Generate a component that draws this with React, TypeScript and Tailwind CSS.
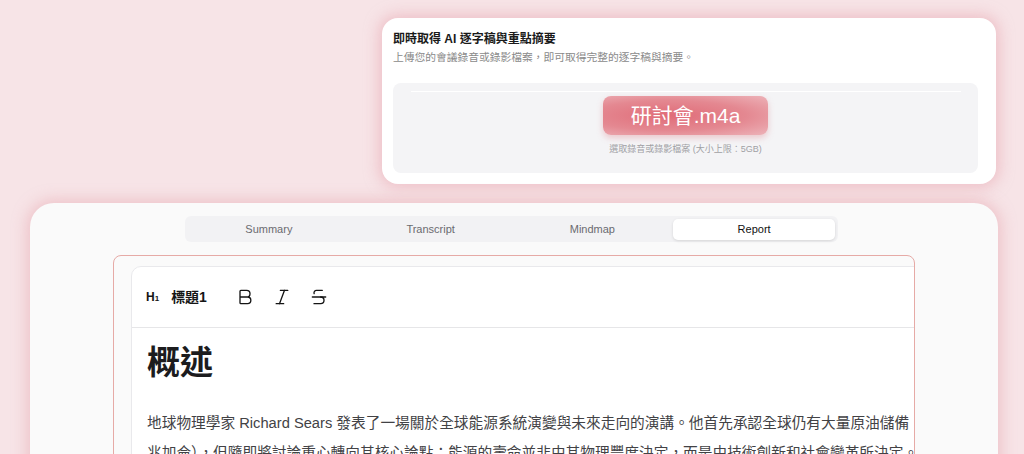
import { Bold, Italic, Strikethrough } from "lucide-react"

const tabs = ["Summary", "Transcript", "Mindmap", "Report"]

const font = "font-['Liberation_Sans','Noto_Sans_CJK_TC',sans-serif]"

export default function App() {
  return (
    <div className={`h-[454px] w-[1024px] overflow-hidden bg-[#f7e4e7] ${font}`}>
      <div className="flex flex-col pt-[18px]">
        {/* Upload card */}
        <div className="ml-[382px] h-[166px] w-[614px] rounded-[16px] bg-white pl-[11px] pt-[13px] shadow-[0_0_14px_4px_rgba(232,168,176,0.55)]">
          <h2 className="text-[12px] font-bold leading-[16px] text-[#1a1a1a]">
            即時取得 AI 逐字稿與重點摘要
          </h2>
          <p className="mt-[3px] text-[10.75px] leading-[14px] text-[#8a8a8a]">
            上傳您的會議錄音或錄影檔案，即可取得完整的逐字稿與摘要。
          </p>
          <div className="mt-[19px] flex h-[90px] w-[585px] flex-col items-center rounded-[8px] bg-[#f4f4f6]">
            <div className="mt-[8px] h-px w-[550px] bg-white" />
            <div className="mt-[4px] flex h-[39px] w-[165px] items-center justify-center rounded-[8px] bg-[radial-gradient(ellipse_at_40%_50%,#e06c78_0%,#e48891_55%,#edb3b9_100%)] shadow-[0_3px_6px_rgba(220,120,130,0.35)]">
              <span className="text-[21px] leading-none text-white">研討會.m4a</span>
            </div>
            <p className="mt-[8px] text-[9px] leading-[12px] text-[#a0a0a4]">
              選取錄音或錄影檔案 (大小上限：5GB)
            </p>
          </div>
        </div>

        {/* Report card */}
        <div className="ml-[30px] mt-[19px] h-[300px] w-[968px] rounded-[24px] bg-[#fafafa] pt-[13px] shadow-[0_0_14px_4px_rgba(232,168,176,0.5)]">
          <div className="ml-[155px] flex h-[26px] w-[653px] items-center rounded-[6px] bg-[#f2f2f4] px-[3px]">
            {tabs.map((t) => (
              <div
                key={t}
                className={`flex h-[21px] flex-1 items-center justify-center rounded-[5px] text-[11px] ${
                  t === "Report"
                    ? "bg-white font-medium text-[#111] shadow-[0_1px_3px_rgba(0,0,0,0.12)]"
                    : "text-[#6b6b70]"
                }`}
              >
                {t}
              </div>
            ))}
          </div>

          <div className="ml-[83px] mt-[13px] h-[260px] w-[802px] overflow-hidden rounded-[8px] border border-[#e6aaa6] pl-[17px] pt-[10px]">
            <div className="h-[260px] w-[820px] rounded-tl-[10px] border border-[#e9e9ec] bg-white">
              <div className="flex h-[61px] items-center border-b border-[#e6e6e8] pl-[14px] text-[#151515]">
                <span className="flex items-baseline font-bold">
                  <span className="text-[12px]">H</span>
                  <span className="text-[8px]">1</span>
                </span>
                <span className="ml-[12px] text-[14px] font-bold">標題1</span>
                <Bold size={20} strokeWidth={1.6} className="ml-[28px]" />
                <Italic size={20} strokeWidth={1.6} className="ml-[17px]" />
                <Strikethrough size={20} strokeWidth={1.6} className="ml-[17px]" />
              </div>
              <div className="pl-[15px]">
                <h1 className="mt-[15px] text-[33px] font-bold leading-[40px] text-[#1c1c1e]">概述</h1>
                <div className="mt-[25px] text-[14.7px] leading-[30px] text-[#424245]">
                  <div className="whitespace-nowrap">
                    地球物理學家 Richard Sears 發表了一場關於全球能源系統演變與未來走向的演講。他首先承認全球仍有大量原油儲備
                  </div>
                  <div className="whitespace-nowrap">
                    兆加侖），但隨即將討論重心轉向其核心論點：能源的壽命並非由其物理豐度決定，而是由技術創新和社會變革所決定。
                  </div>
                </div>
              </div>
            </div>
          </div>
        </div>
      </div>
    </div>
  )
}
